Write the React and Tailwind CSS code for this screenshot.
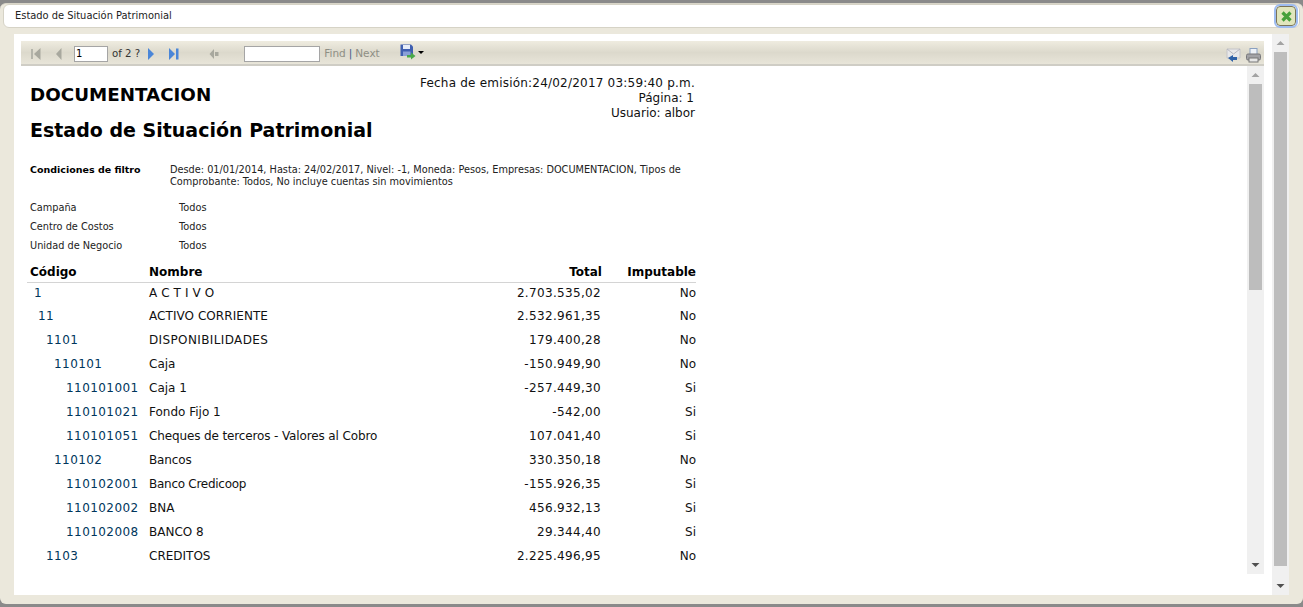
import React from "react";

const rows = [
  ["1", 6, "A C T I V O", "2.703.535,02", "No", "tracking-[0.1px]"],
  ["11", 10, "ACTIVO CORRIENTE", "2.532.961,35", "No", "tracking-[0.06px]"],
  ["1101", 18, "DISPONIBILIDADES", "179.400,28", "No", "tracking-[0.37px]"],
  ["110101", 26, "Caja", "-150.949,90", "No", ""],
  ["110101001", 38, "Caja 1", "-257.449,30", "Si", ""],
  ["110101021", 38, "Fondo Fijo 1", "-542,00", "Si", ""],
  ["110101051", 38, "Cheques de terceros - Valores al Cobro", "107.041,40", "Si", "tracking-[-0.13px]"],
  ["110102", 26, "Bancos", "330.350,18", "No", "tracking-[-0.15px]"],
  ["110102001", 38, "Banco Credicoop", "-155.926,35", "Si", "tracking-[-0.27px]"],
  ["110102002", 38, "BNA", "456.932,13", "Si", ""],
  ["110102008", 38, "BANCO 8", "29.344,40", "Si", ""],
  ["1103", 18, "CREDITOS", "2.225.496,95", "No", ""],
];

function Tri({ dir }) {
  return (
    <svg width="17" height="18" viewBox="0 0 17 18" className="block shrink-0">
      <path d={dir === "up" ? "M8.5 7 L12.5 11 H4.5 Z" : "M4.5 7 H12.5 L8.5 11 Z"} fill={dir === "up" ? "#a3a3a3" : "#505050"} />
    </svg>
  );
}

function Scrollbar({ thumbH }) {
  return (
    <div className="w-[17px] h-full bg-[#f0f0f0] flex flex-col shrink-0">
      <Tri dir="up" />
      <div className="flex-1 flex flex-col">
        <div className="w-[13px] mx-[2px] bg-[#bdbdbd]" style={{ height: thumbH }} />
      </div>
      <Tri dir="down" />
    </div>
  );
}

const First = ({ c }) => (
  <svg width="12" height="14" viewBox="0 0 12 14" className="block"><rect x="1" y="2" width="2" height="10" fill="#b4b4aa" /><path d="M10.5 1 V13 L4 7 Z" fill={c} /></svg>
);
const Prev = ({ c }) => (
  <svg width="8" height="14" viewBox="0 0 8 14" className="block"><path d="M6.5 1 V13 L1 7 Z" fill={c} /></svg>
);
const Next = ({ c }) => (
  <svg width="8" height="14" viewBox="0 0 8 14" className="block"><path d="M1 1 V13 L7 7 Z" fill={c} /></svg>
);
const Last = ({ c }) => (
  <svg width="12" height="14" viewBox="0 0 12 14" className="block"><path d="M1 1 V13 L7 7 Z" fill={c} /><rect x="8" y="1.5" width="2.5" height="11" fill={c} /></svg>
);

export default function App() {
  return (
    <div className="w-[1303px] h-[607px] overflow-hidden bg-[#8a8a8a] pt-[3px] text-black" style={{ fontFamily: '"DejaVu Sans", Verdana, sans-serif' }}>
      <div className="w-[1303px] h-[601px] bg-[#ebe8dc] rounded-[6px] flex flex-col px-[3px] border-t border-[#d8d5c8]">
        <div className="h-[24px] bg-white border border-[#d6d3c6] rounded-[6px] flex items-center pl-[11px] relative shrink-0 text-[9.9px] text-[#222]">
          Estado de Situación Patrimonial
          <div className="absolute right-[3px] top-[1px] w-[20px] h-[20px] rounded-[4px] bg-[#e1e6bd] border border-[#7a7458] outline-2 outline-[#9ebcf0] flex items-center justify-center">
            <svg width="11" height="11" viewBox="0 0 11 11">
              <path d="M1.5 1.5 L9.5 9.5 M9.5 1.5 L1.5 9.5" stroke="#46a03a" strokeWidth="3.2" />
            </svg>
          </div>
        </div>
        <div className="flex mt-[6px] ml-[11px] h-[561px] shrink-0">
          <div className="w-[1258px] bg-white pt-[7px] pl-[7px] pr-[8px] flex flex-col shrink-0">
            <div className="h-[25px] w-[1243px] shrink-0 border-b-2 border-[#cfcdc5] bg-gradient-to-b from-[#efece0] via-[#dcd9cc] to-[#e8e5d9] flex items-center relative text-[10px] pt-[2px]">
              <span className="ml-[9px]"><First c="#a8a89e" /></span>
              <span className="ml-[13px]"><Prev c="#a8a89e" /></span>
              <input readOnly value="1" className="ml-[11px] w-[34px] h-[16px] bg-white border border-[#a5a5a5] text-[10px] px-[1px] outline-none" style={{ fontFamily: "inherit" }} />
              <span className="ml-[4px] text-[#333] text-[10.2px]">of 2 ?</span>
              <span className="ml-[7px]"><Next c="#4a86d8" /></span>
              <span className="ml-[13px]"><Last c="#4a86d8" /></span>
              <span className="ml-[29px]">
                <svg width="10" height="14" viewBox="0 0 10 14" className="block"><path d="M5 2 V12 L0.5 7 Z M6 5 H9.5 V9 H6 Z" fill="#a8a89e" /></svg>
              </span>
              <input readOnly className="ml-[25px] w-[76px] h-[16px] bg-white border border-[#a5a5a5] outline-none" />
              <span className="ml-[4px] text-[#8f8f85] text-[10.5px]">Find</span>
              <span className="mx-[3px] text-[#3b5a8c] text-[10.5px]">|</span>
              <span className="text-[#8f8f85] text-[10.5px]">Next</span>
              <span className="ml-[20px] -mt-[3px]">
                <svg width="16" height="16" viewBox="0 0 16 16" className="block">
                  <path d="M0.5 0.5 H11 L13 2.5 V12 H0.5 Z" fill="#3f5fb0" />
                  <rect x="3" y="1" width="7" height="4" fill="#e6ecf8" />
                  <rect x="3" y="7.5" width="7.5" height="4.5" fill="#8aa0d8" />
                  <path d="M7 11 H11 V8.5 L15.5 12 L11 15.5 V13.5 H7 Z" fill="#49a84a" />
                </svg>
              </span>
              <span className="ml-[2px] -mt-[3px] w-0 h-0 border-x-[3px] border-x-transparent border-t-[3px] border-t-black" />
              <span className="absolute right-[23px] top-[7px]">
                <svg width="15" height="15" viewBox="0 0 15 15" className="block">
                  <path d="M1 1 H14 V10 H1 Z" fill="#e8e8ea" stroke="#c4c4c8" />
                  <path d="M1 1 L7.5 6 L14 1" fill="none" stroke="#b8b8c0" />
                  <path d="M2 10 L7 7 V9 H11 V12 H7 V14 Z" fill="#2f62a8" />
                </svg>
              </span>
              <span className="absolute right-[3px] top-[7px]">
                <svg width="15" height="15" viewBox="0 0 15 15" className="block">
                  <rect x="4" y="0.5" width="7" height="6" fill="#eef2f8" stroke="#8aa0c0" />
                  <rect x="0.5" y="6" width="14" height="6" rx="1.5" fill="#a2a2a6" stroke="#77777a" />
                  <rect x="3" y="10" width="9" height="4" fill="#e6e6e6" stroke="#777" />
                </svg>
              </span>
            </div>
            <div className="flex h-[508px] shrink-0">
              <div className="w-[1226px] shrink-0 overflow-hidden pl-[9px]">
                <div className="w-[666px] relative">
                  <div className="absolute right-[1px] top-[10px] text-right text-[12px] leading-[15px] text-[#111]">
                    <div className="tracking-[0.21px]">Fecha de emisión:24/02/2017 03:59:40 p.m.</div>
                    <div className="pr-[1px]">Página: 1</div>
                    <div>Usuario: albor</div>
                  </div>
                  <div className="pt-[18px] text-[18.3px] leading-[22px] font-bold">DOCUMENTACION</div>
                  <div className="mt-[12px] text-[19px] leading-[24px] font-bold">Estado de Situación Patrimonial</div>
                  <div className="flex mt-[22px] text-[9.75px] leading-[12px]">
                    <div className="w-[140px] font-bold shrink-0 text-[9.5px]">Condiciones de filtro</div>
                    <div className="w-[520px] text-[#222]">Desde: 01/01/2014, Hasta: 24/02/2017, Nivel: -1, Moneda: Pesos, Empresas: DOCUMENTACION, Tipos de Comprobante: Todos, No incluye cuentas sin movimientos</div>
                  </div>
                  <div className="mt-[11px] text-[9.75px] text-[#222]">
                    {["Campaña", "Centro de Costos", "Unidad de Negocio"].map((t) => (
                      <div key={t} className="flex h-[19px] items-center">
                        <div className="w-[149px]">{t}</div>
                        <div>Todos</div>
                      </div>
                    ))}
                  </div>
                  <div className="-ml-[3px] mt-[6px] w-[669px] pl-[3px] flex h-[21px] items-center border-b border-[#d4d4d4] text-[12px] font-bold">
                    <div className="w-[119px]">Código</div>
                    <div className="w-[300px]">Nombre</div>
                    <div className="w-[153px] text-right">Total</div>
                    <div className="w-[94px] text-right">Imputable</div>
                  </div>
                  {rows.map(([code, pad, name, total, imp, tr], i) => (
                    <div key={code} className={`flex items-center text-[12px] text-[#111] -ml-[3px] w-[669px] pl-[3px] ${i === 0 ? "h-[20px]" : i === 1 ? "h-[25px] pt-[1px]" : "h-[24px]"}`}>
                      <div className="w-[119px] text-[#00365c] tracking-[0.44px]" style={{ paddingLeft: pad - 2 }}>{code}</div>
                      <div className={`w-[300px] ${tr}`}>{name}</div>
                      <div className="w-[152px] text-right tracking-[0.33px]">{total}</div>
                      <div className="w-[95px] text-right">{imp}</div>
                    </div>
                  ))}
                </div>
              </div>
              <Scrollbar thumbH={206} />
            </div>
          </div>
          <Scrollbar thumbH={514} />
        </div>
      </div>
    </div>
  );
}
